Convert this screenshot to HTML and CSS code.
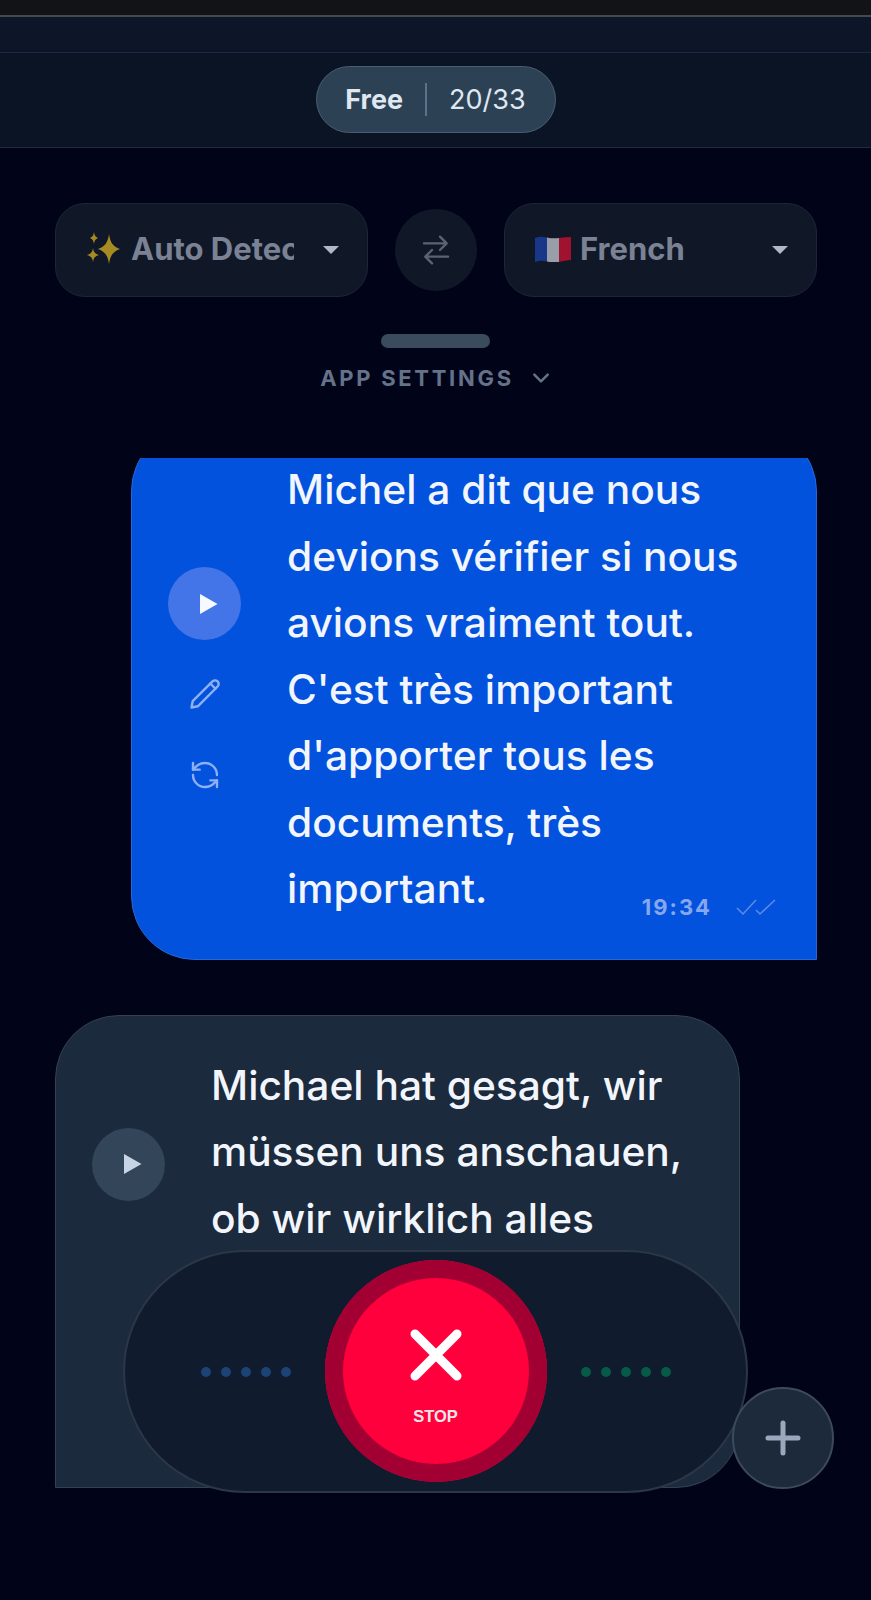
FILE: index.html
```html
<!doctype html>
<html lang="fr">
  <head>
    <meta charset="UTF-8" />
    <meta name="viewport" content="width=device-width, initial-scale=1.0" />
    <title>Live Translate</title>
    <link rel="stylesheet" href="styles.css">
  </head>
  <body>
    <div class="app">
      <div class="status-strip"></div>
      <div class="sub-band"></div>

      <header class="top-bar">
        <div class="plan-pill">
          <span class="plan-name">Free</span>
          <span class="plan-divider"></span>
          <span class="plan-count">20/33</span>
        </div>
      </header>

      <div class="lang-row">
        <button class="lang-select">
          <svg class="lang-icon sparkle" viewBox="0 0 36 36">
            <path d="M23 3c1.200 8.500 3.800 12.200 11 15-7.200 2.800-9.800 6.500-11 15-1.200-8.500-3.800-12.200-11-15 7.200-2.800 9.800-6.500 11-15z" />
            <path d="M8 1c.6 3.600 1.500 4.800 4 6-2.500 1.200-3.400 2.400-4 6-.6-3.600-1.500-4.800-4-6 2.500-1.200 3.400-2.400 4-6z" />
            <path d="M7 17c.7 4.200 1.900 5.800 6 7-4.100 1.200-5.300 2.800-6 7-.7-4.200-1.900-5.800-6-7 4.100-1.200 5.300-2.800 6-7z" />
          </svg>
          <span class="lang-label clipped">Auto Detect</span>
          <span class="caret"></span>
        </button>

        <button class="swap-btn">
          <svg viewBox="0 0 24 24" class="swap-icon">
            <path d="M3 7h17M15 2l5 5-5 5" />
            <path d="M21 17H4M9 12l-5 5 5 5" />
          </svg>
        </button>

        <button class="lang-select">
          <svg class="lang-icon flag" viewBox="0 0 36 26">
            <path d="M0 2c4-1.500 8-1.500 12-.5v24c-4-1-8-1-12 .5z" fill="#1b3a94" />
            <path d="M12 1.500c4 1 8 1 12 .5v24c-4 .5-8 .5-12-.5z" fill="#a9adb8" />
            <path d="M24 2c4-.5 8-1 12-1v23c-4 0-8 1-12 2z" fill="#b01230" />
          </svg>
          <span class="lang-label">French</span>
          <span class="caret"></span>
        </button>
      </div>

      <div class="handle"></div>
      <div class="settings-toggle">
        <span>APP SETTINGS</span>
        <svg viewBox="0 0 24 24" class="chevron"><path d="M4 8l8 8 8-8" /></svg>
      </div>

      <main class="messages">
        <div class="bubble bubble-out">
          <div class="bubble-actions">
            <button class="play-btn">
              <svg viewBox="0 0 24 24"><path d="M6 3.500v17l15-8.500z" /></svg>
            </button>
            <svg viewBox="0 0 24 24" class="edit-icon">
              <path d="M3 21l.8-4.200L17 3.600a2.400 2.400 0 0 1 3.400 3.400L7.200 20.200z" />
              <path d="M15.500 5l3.500 3.500" />
            </svg>
            <svg viewBox="0 0 24 24" class="redo-icon">
              <path d="M21 12a9 9 0 0 0-9-9 9.750 9.750 0 0 0-6.740 2.740L3 8" />
              <path d="M3 3v5h5" />
              <path d="M3 12a9 9 0 0 0 9 9 9.750 9.750 0 0 0 6.740-2.740L21 16" />
              <path d="M16 16h5v5" />
            </svg>
          </div>
          <p class="bubble-text">Michel a dit que nous devions vérifier si nous avions vraiment tout. C'est très important d'apporter tous les documents, très important.</p>
          <div class="bubble-meta">
            <span class="time">19:34</span>
            <svg viewBox="0 0 40 18" class="ticks">
              <path d="M1 10l6 6L20 2" />
              <path d="M20 12l4 4L39 2" />
            </svg>
          </div>
        </div>

        <div class="bubble bubble-in">
          <div class="bubble-actions">
            <button class="play-btn">
              <svg viewBox="0 0 24 24"><path d="M6 3.500v17l15-8.500z" /></svg>
            </button>
          </div>
          <p class="bubble-text">Michael hat gesagt, wir müssen uns anschauen, ob wir wirklich alles</p>
        </div>
      </main>

      <div class="record-dock">
        <div class="dots dots-blue">
          <span></span><span></span><span></span><span></span><span></span>
        </div>
        <button class="stop-btn">
          <svg viewBox="0 0 52 52" class="stop-icon"><path d="M5 5l42 42M47 5L5 47" /></svg>
          <span class="stop-label">STOP</span>
        </button>
        <div class="dots dots-green">
          <span></span><span></span><span></span><span></span><span></span>
        </div>
      </div>

      <button class="add-btn">
        <svg viewBox="0 0 36 36"><path d="M18 3v30M3 18h30" /></svg>
      </button>
    </div>
  </body>
</html>
```

FILE: styles.css
```css
* {
  box-sizing: border-box;
}

body {
  margin: 0;
  background-color: #010418;
  font-family: Inter, "Liberation Sans", sans-serif;
}

button {
  font-family: inherit;
  cursor: pointer;
  padding: 0;
}

.app {
  position: relative;
  width: 871px;
  height: 1600px;
  overflow: hidden;
  display: flex;
  flex-direction: column;
  background-color: #010418;
}

.status-strip {
  height: 17px;
  background-color: #111316;
  border-bottom: 2px solid #45484f;
}

.sub-band {
  height: 36px;
  background-color: #0c1628;
  border-bottom: 1px solid #1c2a3c;
}

.top-bar {
  height: 95px;
  padding-bottom: 2px;
  display: flex;
  justify-content: center;
  align-items: center;
  background-color: #0a1425;
  border-bottom: 1px solid #1f2c3e;
}

.plan-pill {
  width: 240px;
  height: 67px;
  display: flex;
  align-items: center;
  justify-content: center;
  gap: 22px;
  background-color: #2d4155;
  border: 1px solid #4a5d72;
  border-radius: 34px;
  font-size: 27px;
  color: #dfe7f1;
}

.plan-name {
  font-weight: 700;
}

.plan-divider {
  width: 2px;
  height: 33px;
  background-color: #5e7186;
}

.plan-count {
  font-weight: 400;
}

.lang-row {
  display: flex;
  align-items: center;
  gap: 27px;
  margin-top: 55px;
  padding: 0 54px 0 55px;
}

.lang-select {
  flex: 1;
  height: 94px;
  display: flex;
  align-items: center;
  padding: 0 28px 3px 30px;
  background-color: #101828;
  border: 1px solid #1d2636;
  border-radius: 30px;
  color: #7b8294;
}

.lang-icon {
  flex: none;
  display: block;
}

.sparkle {
  width: 36px;
  height: 36px;
  fill: #a88a22;
}

.flag {
  width: 36px;
  height: 26px;
  opacity: 0.9;
}

.lang-label {
  margin-left: 9px;
  font-size: 31px;
  font-weight: 700;
  white-space: nowrap;
  text-align: left;
}

.clipped {
  width: 163px;
  overflow: hidden;
}

.caret {
  margin: 3px 0 0 auto;
  width: 0;
  height: 0;
  border-left: 8px solid transparent;
  border-right: 8px solid transparent;
  border-top: 8px solid #aeb8c9;
}

.swap-btn {
  flex: none;
  width: 82px;
  height: 82px;
  display: flex;
  align-items: center;
  justify-content: center;
  background-color: #101828;
  border: none;
  border-radius: 50%;
}

.swap-icon {
  width: 32px;
  height: 32px;
  fill: none;
  stroke: #5a6373;
  stroke-width: 1.800;
  stroke-linecap: round;
  stroke-linejoin: round;
}

.handle {
  width: 109px;
  height: 14px;
  margin: 37px auto 0;
  background-color: #3a4b5d;
  border-radius: 7px;
}

.settings-toggle {
  display: flex;
  justify-content: center;
  align-items: center;
  gap: 17px;
  height: 30px;
  margin-top: 15px;
  font-size: 22px;
  font-weight: 700;
  letter-spacing: 2.700px;
  color: #64738a;
}

.chevron {
  width: 20px;
  height: 20px;
  fill: none;
  stroke: #64738a;
  stroke-width: 3;
  stroke-linecap: round;
  stroke-linejoin: round;
}

.messages {
  flex: 1;
  margin-top: 65px;
  overflow: hidden;
}

.bubble {
  position: relative;
  display: flex;
  border: 1px solid transparent;
  border-radius: 64px;
  color: #f2f6fc;
}

.bubble-out {
  width: 686px;
  margin: -31px 0 0 131px;
  padding: 29px 30px 36px 36px;
  background-color: #0252dd;
  border-color: #2a66d8;
  border-bottom-right-radius: 0;
}

.bubble-in {
  width: 685px;
  height: 473px;
  margin: 55px 0 0 55px;
  padding: 37px 30px 0 36px;
  background-color: #1b2a3c;
  border-color: #334155;
  border-bottom-left-radius: 0;
}

.bubble-actions {
  flex: none;
  width: 73px;
  margin-right: 46px;
  display: flex;
  flex-direction: column;
  align-items: center;
}

.bubble-out .bubble-actions {
  margin-top: 110px;
}

.bubble-in .bubble-actions {
  margin-top: 75px;
}

.play-btn {
  width: 73px;
  height: 73px;
  display: flex;
  align-items: center;
  justify-content: center;
  border: none;
  border-radius: 50%;
  background-color: #4475e8;
}

.play-btn svg {
  width: 28px;
  height: 28px;
  margin-left: 4px;
  fill: #f6f9ff;
}

.bubble-in .play-btn {
  background-color: #334558;
}

.bubble-in .play-btn svg {
  fill: #c6d4e5;
}

.edit-icon,
.redo-icon {
  fill: none;
  stroke: #8fb0f5;
  stroke-linecap: round;
  stroke-linejoin: round;
}

.edit-icon {
  width: 36px;
  height: 36px;
  margin-top: 36px;
  stroke-width: 1.600;
}

.redo-icon {
  width: 32px;
  height: 32px;
  margin-top: 47px;
  stroke-width: 1.800;
}

.bubble-text {
  margin: 0;
  font-size: 40.700px;
  line-height: 66.500px;
  font-weight: 500;
}

.bubble-meta {
  position: absolute;
  right: 40px;
  bottom: 39px;
  display: flex;
  align-items: center;
  gap: 24px;
}

.time {
  font-size: 22px;
  font-weight: 700;
  letter-spacing: 2px;
  color: #86a6ee;
}

.ticks {
  width: 40px;
  height: 18px;
  fill: none;
  stroke: #5f8be6;
  stroke-width: 1.500;
}

.record-dock {
  position: absolute;
  left: 123px;
  top: 1250px;
  width: 625px;
  height: 243px;
  display: flex;
  align-items: center;
  justify-content: center;
  gap: 34px;
  background-color: #111b2e;
  border: 2px solid #2b3748;
  border-radius: 122px;
}

.dots {
  display: flex;
  gap: 10px;
}

.dots span {
  width: 10px;
  height: 10px;
  border-radius: 50%;
}

.dots-blue span {
  background-color: #1b4376;
}

.dots-green span {
  background-color: #055a48;
}

.stop-btn {
  width: 222px;
  height: 222px;
  margin-bottom: 2px;
  padding-top: 14px;
  display: flex;
  flex-direction: column;
  align-items: center;
  justify-content: center;
  background-color: #ff003c;
  border: none;
  border-radius: 50%;
  box-shadow: inset 0 0 0 18px #a20033;
}

.stop-icon {
  width: 52px;
  height: 52px;
  fill: none;
  stroke: #fff;
  stroke-width: 9;
  stroke-linecap: round;
}

.stop-label {
  margin-top: 26px;
  font-family: "Liberation Sans", Arial, sans-serif;
  font-size: 16.500px;
  font-weight: 700;
  color: #f6e6ea;
}

.add-btn {
  position: absolute;
  left: 732px;
  top: 1387px;
  width: 102px;
  height: 102px;
  display: flex;
  align-items: center;
  justify-content: center;
  background-color: #1d2a3b;
  border: 2px solid #3c4a5c;
  border-radius: 50%;
}

.add-btn svg {
  width: 36px;
  height: 36px;
  fill: none;
  stroke: #9aa8bd;
  stroke-width: 5;
  stroke-linecap: round;
}
```
